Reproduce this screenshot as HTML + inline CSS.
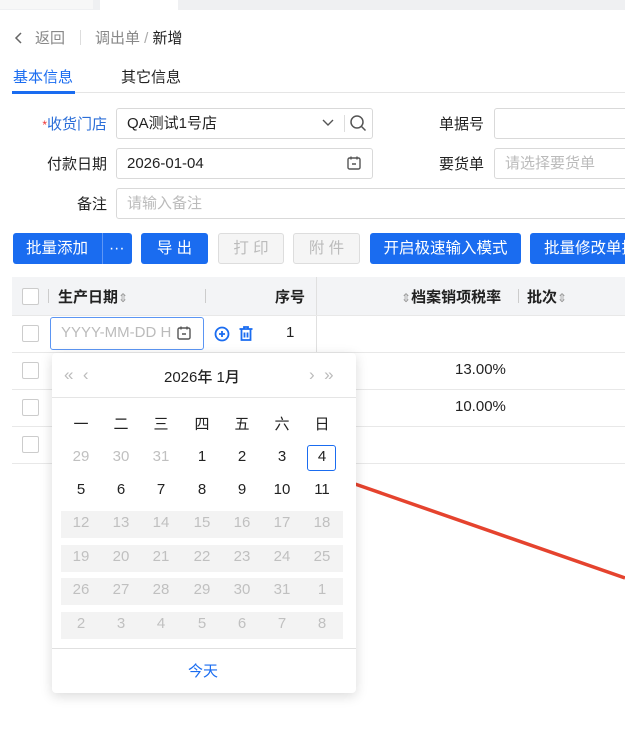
<!DOCTYPE html>
<html><head><meta charset="utf-8"><style>
*{box-sizing:border-box;margin:0;padding:0}
body{width:625px;height:730px;overflow:hidden;background:#fff;font-family:"Liberation Sans","Noto Sans CJK SC",sans-serif;font-size:15px;color:#222;position:relative}
.a{position:absolute;white-space:nowrap}
.lb{position:absolute;white-space:nowrap;text-align:right;width:100px}
.inp{position:absolute;border:1px solid #d9d9d9;border-radius:3px;height:31px;line-height:29px;padding-left:10px}
.ph{color:#bbb}
.btn{position:absolute;top:233px;height:31px;line-height:31px;background:#1a6cf0;color:#fff;border-radius:3px;text-align:center;font-size:15.5px}
.dis{background:#f5f5f5;color:#bbb;border:1px solid #ddd;line-height:29px}
.cb{position:absolute;left:22px;width:17px;height:17px;border:1.5px solid #ccc;border-radius:2px;background:#fff}
.hl{position:absolute;left:12px;right:0;height:1px;background:#e8e8e8}
.d{position:absolute;width:30px;text-align:center;font-size:15px}
.g{color:#c0c0c0}
.band{position:absolute;left:61px;width:282px;height:27px;background:#f3f3f3}
.s{color:#999;font-weight:normal;font-size:12px}
</style></head><body>
<div class="a" style="left:0;top:0;width:625px;height:10px;background:#eff0f2"></div>
<div class="a" style="left:0;top:0;width:93px;height:9px;background:#f7f7f7"></div>
<div class="a" style="left:100px;top:0;width:78px;height:11px;background:#fff"></div>

<svg class="a" style="left:14px;top:31px" width="10" height="14"><path d="M7 2L2 7l5 5" fill="none" stroke="#666" stroke-width="1.5"/></svg>
<div class="a" style="left:35px;top:27px;color:#888">返回</div>
<div class="a" style="left:80px;top:30px;width:1px;height:15px;background:#ddd"></div>
<div class="a" style="left:95px;top:27px;color:#888">调出单 <span style="color:#aaa">/</span> <span style="color:#222">新增</span></div>

<div class="a" style="left:13px;top:66px;color:#1a6cf0">基本信息</div>
<div class="a" style="left:121px;top:66px">其它信息</div>
<div class="a" style="left:12px;top:92px;width:613px;height:1px;background:#e5e5e5"></div>
<div class="a" style="left:12px;top:91px;width:63px;height:3px;background:#1a6cf0"></div>

<div class="lb" style="left:7px;top:113px;color:#2b6ed8"><span style="color:#e33;font-size:12px">*</span>收货门店</div>
<div class="inp" style="left:116px;top:108px;width:257px;color:#222">QA测试1号店</div>
<svg class="a" style="left:321px;top:117px" width="14" height="12"><path d="M2 3l5 5 5-5" fill="none" stroke="#555" stroke-width="1.4"/></svg>
<div class="a" style="left:344px;top:115px;width:1px;height:17px;background:#ddd"></div>
<svg class="a" style="left:349px;top:114px" width="18" height="18"><circle cx="8" cy="8" r="6" fill="none" stroke="#555" stroke-width="1.5"/><path d="M12.5 12.5l4 4" stroke="#555" stroke-width="1.5"/></svg>
<div class="lb" style="left:384px;top:113px">单据号</div>
<div class="inp" style="left:494px;top:108px;width:140px"></div>

<div class="lb" style="left:7px;top:153px">付款日期</div>
<div class="inp" style="left:116px;top:148px;width:257px">2026-01-04</div>
<svg class="a" style="left:346px;top:155px" width="16" height="16"><rect x="2" y="3" width="12" height="11" rx="1.5" fill="none" stroke="#555" stroke-width="1.4"/><path d="M5 1.5v3M11 1.5v3M6 9h4" stroke="#555" stroke-width="1.4"/></svg>
<div class="lb" style="left:384px;top:153px">要货单</div>
<div class="inp ph" style="left:494px;top:148px;width:140px">请选择要货单</div>

<div class="lb" style="left:7px;top:193px">备注</div>
<div class="inp ph" style="left:116px;top:188px;width:520px">请输入备注</div>

<div class="btn" style="left:13px;width:119px;text-align:left;padding-left:13px">批量添加<span style="position:absolute;left:89px;top:0;width:1px;height:31px;background:#5f97f5"></span><span style="position:absolute;left:96px">···</span></div>
<div class="btn" style="left:141px;width:67px">导 出</div>
<div class="btn dis" style="left:218px;width:66px">打 印</div>
<div class="btn dis" style="left:293px;width:67px">附 件</div>
<div class="btn" style="left:370px;width:151px">开启极速输入模式</div>
<div class="btn" style="left:530px;width:110px;text-align:left;padding-left:14px">批量修改单据</div>

<div class="a" style="left:12px;top:277px;width:613px;height:38px;background:#f3f4f6"></div>
<div class="cb" style="top:288px"></div>
<div class="a" style="left:48px;top:289px;width:1px;height:14px;background:#ccc"></div>
<div class="a" style="left:58px;top:286px;font-weight:bold">生产日期<span class="s">&#8661;</span></div>
<div class="a" style="left:205px;top:289px;width:1px;height:14px;background:#ccc"></div>
<div class="a" style="left:275px;top:286px;font-weight:bold">序号</div>
<div class="a" style="left:316px;top:277px;width:1px;height:75px;background:#e0e0e0"></div>
<div class="a" style="left:401px;top:286px;font-weight:bold"><span class="s">&#8661;</span>档案销项税率</div>
<div class="a" style="left:518px;top:289px;width:1px;height:14px;background:#ccc"></div>
<div class="a" style="left:527px;top:286px;font-weight:bold">批次<span class="s">&#8661;</span></div>

<div class="hl" style="top:315px"></div>
<div class="hl" style="top:352px"></div>
<div class="hl" style="top:389px"></div>
<div class="hl" style="top:426px"></div>
<div class="hl" style="top:463px"></div>
<div class="cb" style="top:325px"></div>
<div class="cb" style="top:362px"></div>
<div class="cb" style="top:399px"></div>
<div class="cb" style="top:436px"></div>

<div class="a" style="left:50px;top:317px;width:154px;height:33px;border:1.5px solid #5b95f3;border-radius:3px;padding-left:10px;line-height:30px;color:#bbb;overflow:hidden">YYYY-MM-DD HH</div>
<div class="a" style="left:172px;top:320px;width:28px;height:27px;background:#fff"></div>
<svg class="a" style="left:176px;top:325px" width="16" height="16"><rect x="2" y="3" width="12" height="11" rx="1.5" fill="none" stroke="#555" stroke-width="1.4"/><path d="M5 1.5v3M11 1.5v3M6 9h4" stroke="#555" stroke-width="1.4"/></svg>
<svg class="a" style="left:214px;top:326px" width="16" height="16"><circle cx="8" cy="8" r="6.5" fill="none" stroke="#1a6cf0" stroke-width="1.8"/><path d="M8 5v6M5 8h6" stroke="#1a6cf0" stroke-width="1.8"/></svg>
<svg class="a" style="left:238px;top:325px" width="16" height="17"><path d="M1.5 4h13M6 4V2h4v2M3.5 4v11h9V4M6.5 7.5v5M9.5 7.5v5" fill="none" stroke="#1a6cf0" stroke-width="1.8"/></svg>
<div class="a" style="left:286px;top:324px">1</div>
<div class="a" style="left:455px;top:361px">13.00%</div>
<div class="a" style="left:455px;top:398px">10.00%</div>

<svg class="a" style="left:350px;top:478px" width="275" height="110"><path d="M5 6L275 100" stroke="#e5432e" stroke-width="3.5"/></svg>

<div class="a" style="left:52px;top:353px;width:304px;height:340px;background:#fff;border-radius:4px;box-shadow:0 3px 12px rgba(0,0,0,.15)"></div>
<div class="a" style="left:64px;top:365px;color:#bbb;font-size:17px">«&nbsp;&nbsp;‹</div>
<div class="a" style="left:164px;top:366px;font-weight:500">2026年 1月</div>
<div class="a" style="left:309px;top:365px;color:#bbb;font-size:17px">›&nbsp;&nbsp;»</div>
<div class="a" style="left:52px;top:397px;width:304px;height:1px;background:#e5e5e5"></div>

<div class="band" style="top:511px"></div>
<div class="band" style="top:545px"></div>
<div class="band" style="top:578px"></div>
<div class="band" style="top:612px"></div>
<div class="a" style="left:307px;top:445px;width:29px;height:26px;border:1.5px solid #1a6cf0;border-radius:3px"></div>

<div class="a" style="left:52px;top:648px;width:304px;height:1px;background:#e0e0e0"></div>
<div class="a" style="left:188px;top:660px;color:#1a6cf0">今天</div>

<div id="cal"></div>
<script>
var xs=[81,121,161,202,242,282,322];
var rows=[["一","二","三","四","五","六","日"],["29","30","31","1","2","3","4"],["5","6","7","8","9","10","11"],["12","13","14","15","16","17","18"],["19","20","21","22","23","24","25"],["26","27","28","29","30","31","1"],["2","3","4","5","6","7","8"]];
var ys=[413,448,481,514,548,581,615];
var h="";
for(var r=0;r<7;r++)for(var c=0;c<7;c++){
 var g=(r==1&&c<3)||r>=3;
 h+='<div class="d'+(g?' g':'')+'" style="left:'+(xs[c]-15)+'px;top:'+ys[r]+'px">'+rows[r][c]+'</div>';
}
document.getElementById("cal").innerHTML=h;
</script>
</body></html>
